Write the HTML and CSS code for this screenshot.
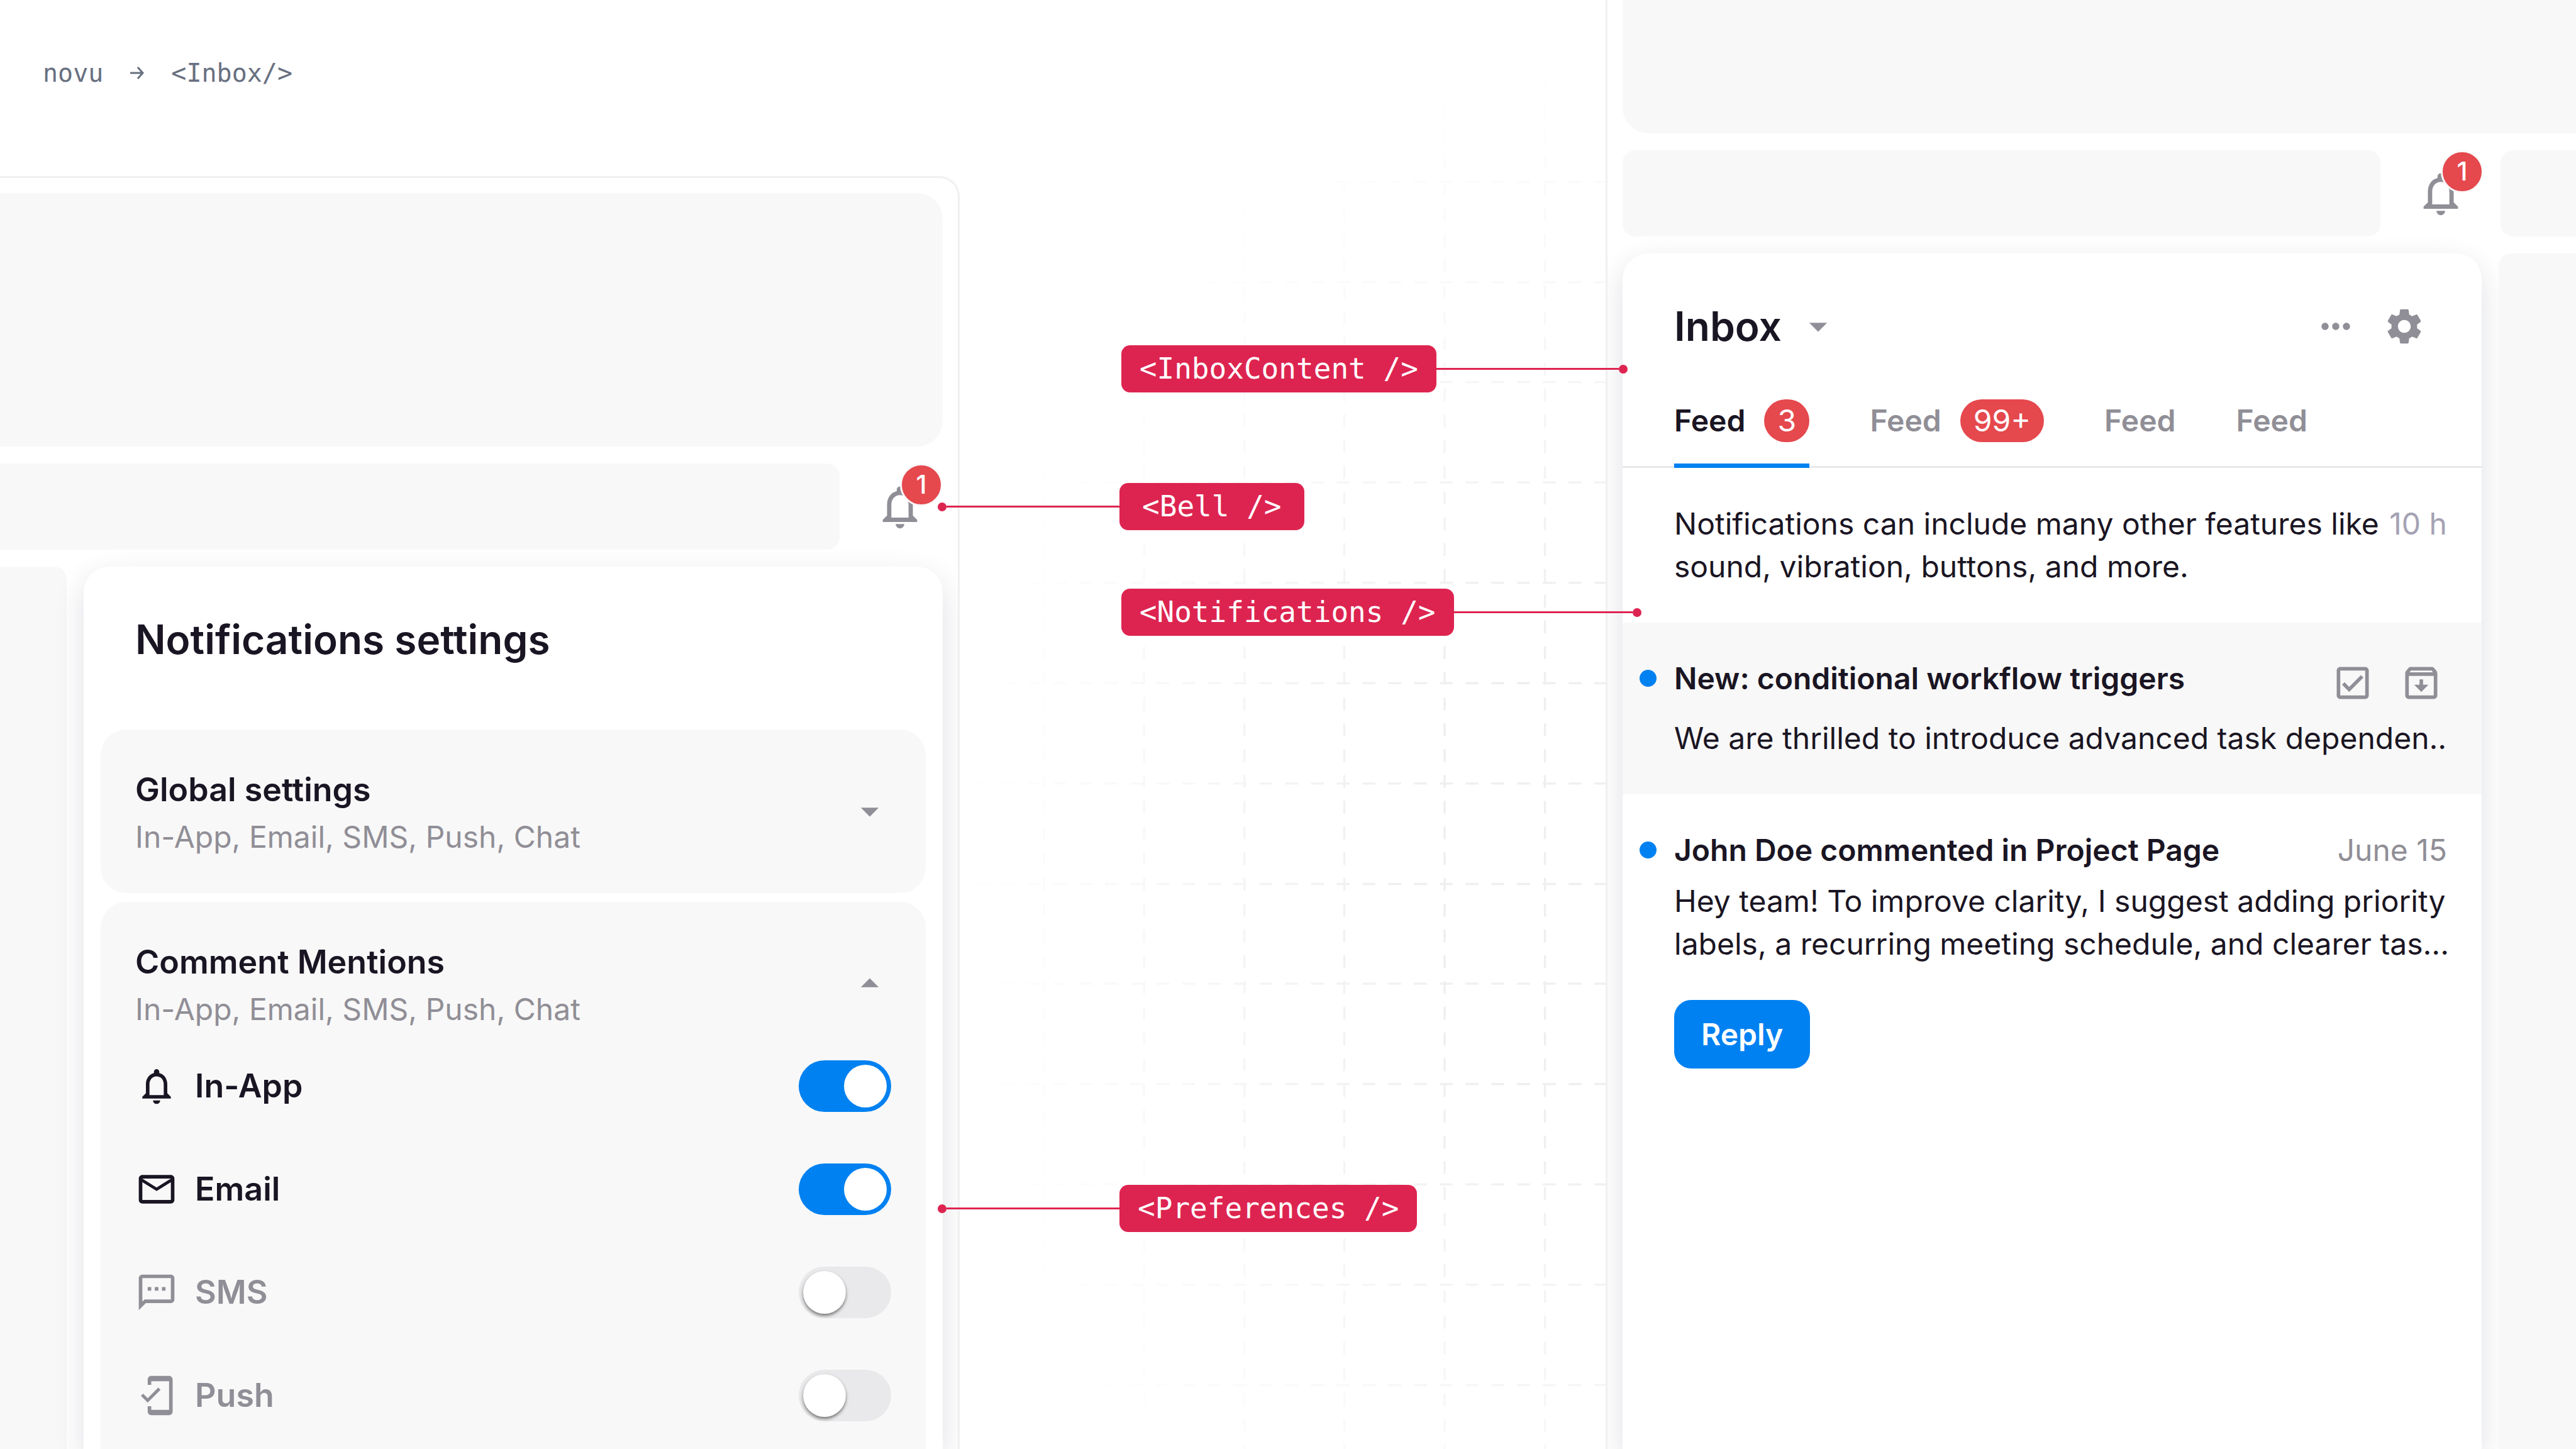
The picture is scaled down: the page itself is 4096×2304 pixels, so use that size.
FILE: index.html
```html
<!DOCTYPE html>
<html lang="en">
<head>
<meta charset="utf-8">
<meta name="viewport" content="width=device-width, initial-scale=1">
<title>novu Inbox</title>
<link rel="stylesheet" href="styles.css">
</head>
<body>
<svg class="sprite" aria-hidden="true">
  <symbol id="i-bell" viewBox="0 0 24 24"><path d="M12 22c1.1 0 2-.9 2-2h-4c0 1.1.9 2 2 2zm6-6v-5c0-3.07-1.63-5.64-4.5-6.32V4c0-.83-.67-1.5-1.5-1.5s-1.5.67-1.5 1.5v.68C7.64 5.36 6 7.92 6 11v5l-2 2v1h16v-1l-2-2zm-2 1H8v-6c0-2.48 1.51-4.5 4-4.5s4 2.02 4 4.5v6z"/></symbol>
  <symbol id="i-mail" viewBox="0 0 24 24"><path d="M20 4H4c-1.1 0-2 .9-2 2v12c0 1.1.9 2 2 2h16c1.1 0 2-.9 2-2V6c0-1.1-.9-2-2-2zm0 14H4V8l8 5 8-5v10zm-8-7L4 6h16l-8 5z"/></symbol>
  <symbol id="i-sms" viewBox="0 0 24 24"><path d="M20 2H4c-1.1 0-2 .9-2 2v18l4-4h14c1.1 0 2-.9 2-2V4c0-1.1-.9-2-2-2zm0 14H5.17L4 17.17V4h16v12zM7 9h2v2H7zm4 0h2v2h-2zm4 0h2v2h-2z"/></symbol>
  <symbol id="i-push" viewBox="0 0 24 24"><path d="M19 1H9c-1.1 0-2 .9-2 2v3h2V4h10v16H9v-2H7v3c0 1.1.9 2 2 2h10c1.1 0 2-.9 2-2V3c0-1.1-.9-2-2-2zM7.01 13.47l-2.55-2.55-1.27 1.27L7 16l7.19-7.19-1.27-1.27z"/></symbol>
  <symbol id="i-down" viewBox="0 0 24 24"><path d="M7 10l5 5 5-5z"/></symbol>
  <symbol id="i-up" viewBox="0 0 24 24"><path d="M7 14l5-5 5 5z"/></symbol>
  <symbol id="i-more" viewBox="0 0 24 24"><path d="M6 10c-1.1 0-2 .9-2 2s.9 2 2 2 2-.9 2-2-.9-2-2-2zm12 0c-1.1 0-2 .9-2 2s.9 2 2 2 2-.9 2-2-.9-2-2-2zm-6 0c-1.1 0-2 .9-2 2s.9 2 2 2 2-.9 2-2-.9-2-2-2z"/></symbol>
  <symbol id="i-gear" viewBox="0 0 24 24"><path d="M19.14 12.94c.04-.3.06-.61.06-.94 0-.32-.02-.64-.07-.94l2.03-1.58c.18-.14.23-.41.12-.61l-1.92-3.32c-.12-.22-.37-.29-.59-.22l-2.39.96c-.5-.38-1.03-.7-1.62-.94l-.36-2.54c-.04-.24-.24-.41-.48-.41h-3.84c-.24 0-.43.17-.47.41l-.36 2.54c-.59.24-1.13.57-1.62.94l-2.39-.96c-.22-.08-.47 0-.59.22L2.74 8.87c-.12.21-.08.47.12.61l2.03 1.58c-.05.3-.09.63-.09.94s.02.64.07.94l-2.03 1.58c-.18.14-.23.41-.12.61l1.92 3.32c.12.22.37.29.59.22l2.39-.96c.5.38 1.03.7 1.62.94l.36 2.54c.05.24.24.41.48.41h3.84c.24 0 .44-.17.47-.41l.36-2.54c.59-.24 1.13-.56 1.62-.94l2.39.96c.22.08.47 0 .59-.22l1.92-3.32c.12-.22.07-.47-.12-.61l-2.01-1.58zM12 15.6c-1.98 0-3.6-1.62-3.6-3.6s1.62-3.6 3.6-3.6 3.6 1.62 3.6 3.6-1.62 3.6-3.6 3.6z"/></symbol>
  <symbol id="i-check" viewBox="0 0 24 24"><path d="M19 3H5c-1.1 0-2 .9-2 2v14c0 1.1.9 2 2 2h14c1.1 0 2-.9 2-2V5c0-1.1-.9-2-2-2zm0 16H5V5h14v14zM17.99 9l-1.41-1.42-6.59 6.59-2.58-2.57-1.42 1.41 4 3.99z"/></symbol>
  <symbol id="i-archive" viewBox="0 0 24 24"><path d="M20.54 5.23l-1.39-1.68C18.88 3.21 18.47 3 18 3H6c-.47 0-.88.21-1.16.55L3.46 5.23C3.17 5.57 3 6.02 3 6.5V19c0 1.1.9 2 2 2h14c1.1 0 2-.9 2-2V6.5c0-.48-.17-.93-.46-1.27zM6.24 5h11.52l.83 1H5.42l.82-1zM5 19V8h14v11H5zm8-9h-2v3H8l4 4 4-4h-3z"/></symbol>
</svg>

<div class="page">
  <div class="column">
    <nav class="crumbs" aria-label="Breadcrumb">
      <span>novu</span>
      <svg class="crumb-arrow" viewBox="0 0 24 24" aria-hidden="true"><path d="M1 12h20M13 3l8 9-8 9"/></svg>
      <span>&lt;Inbox/&gt;</span>
    </nav>
    <main class="window window-left">
      <div class="block hero"></div>
      <div class="bar-row">
        <div class="block bar"></div>
        <div class="bell-slot">
          <button class="bell" aria-label="Notifications, 1 unread"><svg><use href="#i-bell"/></svg><span class="bell-count">1</span></button>
        </div>
      </div>
      <div class="panel-row">
        <div class="block side side-left"></div>
        <section class="card settings">
          <h2 class="card-title">Notifications settings</h2>
          <div class="groups">
            <section class="group">
              <button class="group-head" aria-expanded="false">
                <span class="group-text"><span class="group-name">Global settings</span><span class="group-note">In-App, Email, SMS, Push, Chat</span></span>
                <svg class="icon"><use href="#i-down"/></svg>
              </button>
            </section>
            <section class="group group-open">
              <button class="group-head" aria-expanded="true">
                <span class="group-text"><span class="group-name">Comment Mentions</span><span class="group-note">In-App, Email, SMS, Push, Chat</span></span>
                <svg class="icon"><use href="#i-up"/></svg>
              </button>
              <div class="channels">
                <label class="channel"><svg class="icon"><use href="#i-bell"/></svg><span>In-App</span><input class="toggle" type="checkbox" checked></label>
                <label class="channel"><svg class="icon"><use href="#i-mail"/></svg><span>Email</span><input class="toggle" type="checkbox" checked></label>
                <label class="channel channel-off"><svg class="icon"><use href="#i-sms"/></svg><span>SMS</span><input class="toggle" type="checkbox"></label>
                <label class="channel channel-off"><svg class="icon"><use href="#i-push"/></svg><span>Push</span><input class="toggle" type="checkbox"></label>
              </div>
            </section>
          </div>
        </section>
      </div>
    </main>
  </div>

  <div class="column middle">
    <svg class="grid" viewBox="1788 0 1204 2700" preserveAspectRatio="xMaxYMin slice" aria-hidden="true">
      <defs>
        <radialGradient id="fade" gradientUnits="userSpaceOnUse" cx="0" cy="0" r="1" gradientTransform="translate(2992 1640) scale(1240 1560)">
          <stop offset="0" stop-color="#fff"/>
          <stop offset=".3" stop-color="#fff"/>
          <stop offset="1" stop-color="#fff" stop-opacity="0"/>
        </radialGradient>
        <mask id="grid-mask" maskUnits="userSpaceOnUse" x="1788" y="0" width="1204" height="2700"><rect x="1788" width="1204" height="2700" fill="url(#fade)"/></mask>
      </defs>
      <g class="grid-lines" mask="url(#grid-mask)">
        <path stroke-dashoffset="-20" d="M1945 -16V2700M2132 -16V2700M2319 -16V2700M2505 -16V2700M2692 -16V2700M2879 -16V2700"/>
        <path d="M1771 339H2992M1771 526H2992M1771 712H2992M1771 899H2992M1771 1086H2992M1771 1273H2992M1771 1460H2992M1771 1647H2992M1771 1833H2992M1771 2020H2992M1771 2207H2992M1771 2394H2992M1771 2581H2992"/>
      </g>
    </svg>
    <div class="callout callout-right callout-content"><span class="tag">&lt;InboxContent /&gt;</span><span class="wire"></span></div>
    <div class="callout callout-left callout-bell"><span class="wire"></span><span class="tag tag-wide">&lt;Bell /&gt;</span></div>
    <div class="callout callout-right callout-list"><span class="tag">&lt;Notifications /&gt;</span><span class="wire"></span></div>
    <div class="callout callout-left callout-prefs"><span class="wire"></span><span class="tag">&lt;Preferences /&gt;</span></div>
  </div>

  <div class="column">
    <div class="window window-right">
      <div class="block top"></div>
      <div class="bar-row">
        <div class="block bar bar-round"></div>
        <div class="bell-slot bell-slot-even">
          <button class="bell" aria-label="Notifications, 1 unread"><svg><use href="#i-bell"/></svg><span class="bell-count">1</span></button>
        </div>
        <div class="block bar-end"></div>
      </div>
      <div class="panel-row">
        <section class="card inbox">
          <header class="inbox-head">
            <h2 class="inbox-title">Inbox</h2>
            <button class="icon-button" aria-label="Switch view"><svg class="icon"><use href="#i-down"/></svg></button>
            <div class="inbox-tools">
              <button class="icon-button" aria-label="More"><svg class="icon"><use href="#i-more"/></svg></button>
              <button class="icon-button" aria-label="Settings"><svg class="icon"><use href="#i-gear"/></svg></button>
            </div>
          </header>
          <div class="tabs" role="tablist">
            <button class="tab" role="tab" aria-selected="true">Feed<span class="count">3</span></button>
            <button class="tab" role="tab" aria-selected="false">Feed<span class="count">99+</span></button>
            <button class="tab" role="tab" aria-selected="false">Feed</button>
            <button class="tab" role="tab" aria-selected="false">Feed</button>
          </div>
          <article class="item">
            <div class="item-line">
              <p class="item-body">Notifications can include many other features like<br>sound, vibration, buttons, and more.</p>
              <time class="item-time item-time-soft">10 h</time>
            </div>
          </article>
          <article class="item item-hover">
            <div class="item-line unread">
              <h3 class="item-title">New: conditional workflow triggers</h3>
              <div class="item-tools">
                <button class="icon-button" aria-label="Mark as read"><svg class="icon"><use href="#i-check"/></svg></button>
                <button class="icon-button" aria-label="Archive"><svg class="icon"><use href="#i-archive"/></svg></button>
              </div>
            </div>
            <p class="item-body">We are thrilled to introduce advanced task dependen..</p>
          </article>
          <article class="item">
            <div class="item-line unread">
              <h3 class="item-title">John Doe commented in Project Page</h3>
              <time class="item-time">June 15</time>
            </div>
            <p class="item-body">Hey team! To improve clarity, I suggest adding priority<br>labels, a recurring meeting schedule, and clearer tas...</p>
            <button class="reply">Reply</button>
          </article>
        </section>
        <div class="block side side-right"></div>
      </div>
    </div>
  </div>
</div>
</body>
</html>
```
FILE: styles.css
```css
:root {
  --ink: #1a1523;
  --muted: #908e96;
  --soft: #a5a2b4;
  --surface: #f8f8f8;
  --line: #f0f0f0;
  --blue: #0081f1;
  --red: #e5484d;
  --crimson: #dd2450;
}

* { box-sizing: border-box; }

body {
  margin: 0;
  background: #fff;
  color: var(--ink);
  font-family: Inter, "Liberation Sans", sans-serif;
  font-size: 48px;
  line-height: 68px;
  overflow: hidden;
}

h2, h3, p { margin: 0; font-size: inherit; font-weight: inherit; }

button {
  margin: 0;
  padding: 0;
  border: 0;
  background: none;
  color: inherit;
  font: inherit;
  text-align: left;
}

.sprite { position: absolute; width: 0; height: 0; }

.page {
  display: grid;
  grid-template-columns: 1526fr 1027fr 1543fr;
  height: 100vh;
}

.column { display: flex; flex-direction: column; min-width: 0; min-height: 0; }

/* Breadcrumb */
.crumbs {
  display: flex;
  align-items: center;
  gap: 42px;
  padding: 92px 68px 140px;
  color: #687080;
  font: 40px/48px "DejaVu Sans Mono", monospace;
}
.crumb-arrow { width: 24px; height: 24px; fill: none; stroke: currentColor; stroke-width: 3; }

/* Windows */
.window {
  flex: 1;
  display: flex;
  flex-direction: column;
  gap: 27px;
  min-height: 0;
  overflow: hidden;
  background: #fff;
}
.window-left {
  padding: 24px 24px 0 0;
  border: solid var(--line);
  border-width: 3px 3px 0 0;
  border-radius: 0 32px 0 0;
}
.window-right { padding-left: 24px; border-left: 3px solid var(--line); }

.block { background: var(--surface); }
.hero { flex: none; height: 403px; border-radius: 0 41px 41px 0; }
.top { flex: none; height: 212px; border-radius: 0 0 0 41px; }
.bar-row { flex: none; display: flex; height: 137px; }
.bar { flex: 1; border-radius: 0 20px 20px 0; }
.bar-round { border-radius: 20px; }
.bar-end { width: 120px; border-radius: 20px 0 0 20px; }

.bell-slot { display: flex; align-items: center; padding: 0 27px 0 55px; }
.bell-slot-even { padding-right: 54px; }
.bell { position: relative; display: block; width: 82px; height: 82px; color: var(--muted); }
.bell svg { display: block; width: 100%; height: 100%; fill: currentColor; }
.bell-count {
  position: absolute;
  top: -28px;
  right: -27px;
  width: 68px;
  height: 68px;
  border: 3px solid var(--surface);
  border-radius: 50%;
  background: var(--red);
  color: #fff;
  font-size: 41px;
  font-weight: 500;
  line-height: 60px;
  text-align: center;
}

.panel-row { flex: 1; display: flex; gap: 27px; min-height: 0; }
.side-left { width: 106px; border-radius: 0 20px 0 0; }
.side-right { position: relative; width: 123px; border-radius: 20px 0 0 0; }
.card {
  position: relative;
  flex: 1;
  display: flex;
  flex-direction: column;
  min-width: 0;
  border-radius: 41px 41px 0 0;
  background: #fff;
  box-shadow: 0 17px 48px rgba(28, 32, 64, .14);
}

.icon { flex: none; display: block; width: 68px; height: 68px; fill: currentColor; }
.icon-button { display: block; color: var(--muted); }

/* Settings card */
.card-title { padding: 75px 82px 102px; font-size: 64px; font-weight: 600; line-height: 82px; }
.groups { flex: 1; display: flex; flex-direction: column; gap: 14px; padding: 0 27px; }
.group { padding: 55px; border-radius: 41px; background: var(--surface); }
.group-open { flex: 1; border-radius: 41px 41px 0 0; }
.group-head { display: flex; align-items: center; justify-content: space-between; width: 100%; color: var(--muted); }
.group-text { display: flex; flex-direction: column; }
.group-name { color: var(--ink); font-size: 52px; font-weight: 600; line-height: 82px; }
.channels { display: flex; flex-direction: column; gap: 82px; padding-top: 47px; }
.channel { display: flex; align-items: center; gap: 27px; font-size: 52px; font-weight: 600; line-height: 82px; }
.channel-off { color: var(--muted); }

.toggle {
  appearance: none;
  width: 147px;
  height: 82px;
  margin: 0 0 0 auto;
  padding: 7px;
  border-radius: 41px;
  background: #e9e9eb;
}
.toggle::before {
  content: "";
  display: block;
  width: 68px;
  height: 68px;
  border-radius: 50%;
  background: #fff;
  box-shadow: 0 3px 5px rgba(0, 0, 0, .5);
}
.toggle:checked { background: var(--blue); }
.toggle:checked::before { margin-left: auto; box-shadow: none; }

/* Grid and callouts */
.middle { position: relative; z-index: 1; }
.grid { display: block; width: 100%; height: 100%; }
.grid-lines { fill: none; stroke: #efeff0; stroke-width: 4; stroke-dasharray: 24 24; }

.callout { position: absolute; display: flex; align-items: center; }
.callout-right { left: 25%; right: -35px; }
.callout-left { left: -35px; }
.callout-content { top: 549px; }
.callout-bell { top: 768px; }
.callout-list { top: 936px; right: -57px; }
.callout-prefs { top: 1884px; }
.tag {
  padding: 0 29px;
  border-radius: 14px;
  background: var(--crimson);
  color: #fff;
  font: 46px/75px "DejaVu Sans Mono", monospace;
  white-space: nowrap;
}
.tag-wide { padding: 0 36px; }
.wire { flex: 1; display: flex; align-items: center; height: 14px; }
.wire::before { content: ""; flex: 1; height: 3px; background: var(--crimson); }
.wire::after { content: ""; width: 14px; height: 14px; border-radius: 50%; background: var(--crimson); }
.callout-left .wire { flex: none; flex-direction: row-reverse; width: 289px; }

/* Inbox card */
.inbox-head { display: flex; align-items: center; gap: 24px; padding: 75px 89px 75px 82px; }
.inbox-title { font-size: 64px; font-weight: 600; line-height: 82px; }
.inbox-tools { display: flex; gap: 41px; margin-left: auto; }
.tabs { display: flex; gap: 96px; padding: 0 82px; box-shadow: inset 0 -3px 0 #e9e8ea; }
.tab { display: flex; gap: 30px; padding-bottom: 41px; color: var(--muted); font-weight: 600; }
.tab[aria-selected="true"] { color: var(--ink); box-shadow: inset 0 -7px 0 var(--blue); }
.count {
  min-width: 72px;
  padding: 0 21px;
  border-radius: 34px;
  background: var(--red);
  color: #fff;
  font-weight: 400;
  text-align: center;
}

.item { padding: 55px 55px 55px 82px; }
.item-hover { background: var(--surface); }
.item-line { position: relative; display: flex; justify-content: space-between; }
.item-body { white-space: nowrap; }
.item-title { font-weight: 600; white-space: nowrap; }
.item-time { color: var(--muted); white-space: nowrap; }
.item-time-soft { color: var(--soft); }
.unread { margin-bottom: 13px; }
.unread::before {
  content: "";
  position: absolute;
  top: 20px;
  left: -55px;
  width: 27px;
  height: 27px;
  border-radius: 50%;
  background: var(--blue);
}
.item-tools { display: flex; gap: 41px; padding: 7px; }
.reply {
  display: block;
  margin-top: 55px;
  padding: 0 43px;
  border-radius: 27px;
  background: var(--blue);
  color: #fff;
  font-weight: 600;
  line-height: 109px;
}
```
